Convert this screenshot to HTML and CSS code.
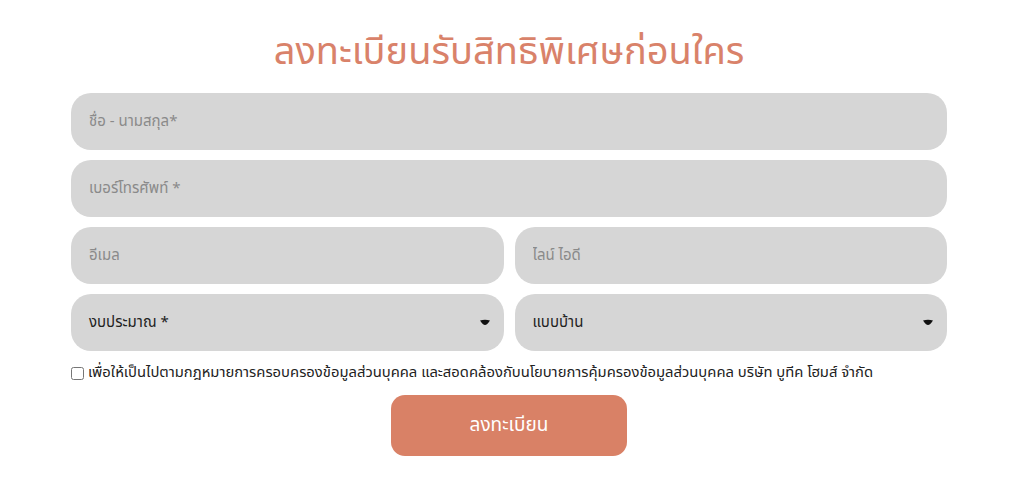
FILE: index.html
```html
<!DOCTYPE html>
<html lang="th">
<head>
  <meta charset="UTF-8" />
  <title>ลงทะเบียน</title>
  <link rel="stylesheet" href="styles.css">
</head>
<body>

  <div class="container">
    <h2 class="title">ลงทะเบียนรับสิทธิพิเศษก่อนใคร</h2>
    <form id="registerForm" class="form">
      <input type="text" class="field" placeholder="ชื่อ - นามสกุล*">
      <input type="text" class="field" placeholder="เบอร์โทรศัพท์ *">

      <div class="row">
        <input type="email" class="field" placeholder="อีเมล">
        <input type="text" class="field" placeholder="ไลน์ ไอดี">
      </div>

      <div class="row">
        <div class="select">
          <span>งบประมาณ *</span>
          <svg class="caret" width="12" height="7" viewBox="0 0 12 7"><path d="M1 1.5 Q6 0 11 1.5 Q8 6 6 6 Q4 6 1 1.5Z" fill="#111"/></svg>
        </div>
        <div class="select">
          <span>แบบบ้าน</span>
          <svg class="caret" width="12" height="7" viewBox="0 0 12 7"><path d="M1 1.5 Q6 0 11 1.5 Q8 6 6 6 Q4 6 1 1.5Z" fill="#111"/></svg>
        </div>
      </div>

      <label class="consent">
        <input type="checkbox">
        <span>เพื่อให้เป็นไปตามกฎหมายการครอบครองข้อมูลส่วนบุคคล และสอดคล้องกับนโยบายการคุ้มครองข้อมูลส่วนบุคคล บริษัท บูทีค โฮมส์ จำกัด</span>
      </label>

      <button type="submit" class="submit">ลงทะเบียน</button>
    </form>
  </div>

</body>
</html>
```

FILE: styles.css
```css
body {
  font-family: "Noto Sans Thai", "Noto Sans", "DejaVu Sans", sans-serif;
  margin: 0;
  background: #fff;
}

.container {
  width: 876px;
  margin: 0 0 0 71px;
  padding-top: 27px;
}

.title {
  margin: 0 0 14px;
  text-align: center;
  font-size: 38px;
  font-weight: 400;
  line-height: 52px;
  color: #d9826a;
}

.form {
  display: flex;
  flex-direction: column;
  gap: 10px;
}

.row {
  display: grid;
  grid-template-columns: 1fr 1fr;
  gap: 11px;
}

.field,
.select {
  box-sizing: border-box;
  height: 57px;
  width: 100%;
  border: none;
  border-radius: 20px;
  background: #d6d6d6;
  padding: 0 18px;
  font-family: inherit;
  font-size: 15px;
  color: #333;
  outline: none;
}

.field::placeholder {
  color: #8a8a8a;
}

.select {
  display: flex;
  align-items: center;
  justify-content: space-between;
  color: #222;
}

.caret {
  margin-right: -5px;
}

.consent {
  display: flex;
  align-items: center;
  gap: 4px;
  margin: 2px 0 2px;
  font-size: 14.8px;
  line-height: 20px;
  color: #222;
}

.consent input {
  margin: 0;
  width: 13px;
  height: 13px;
}

.submit {
  align-self: center;
  width: 236px;
  height: 61px;
  border: none;
  border-radius: 14px;
  background-color: #d98166;
  color: #fff;
  font-family: inherit;
  font-size: 19px;
  cursor: pointer;
}
```
